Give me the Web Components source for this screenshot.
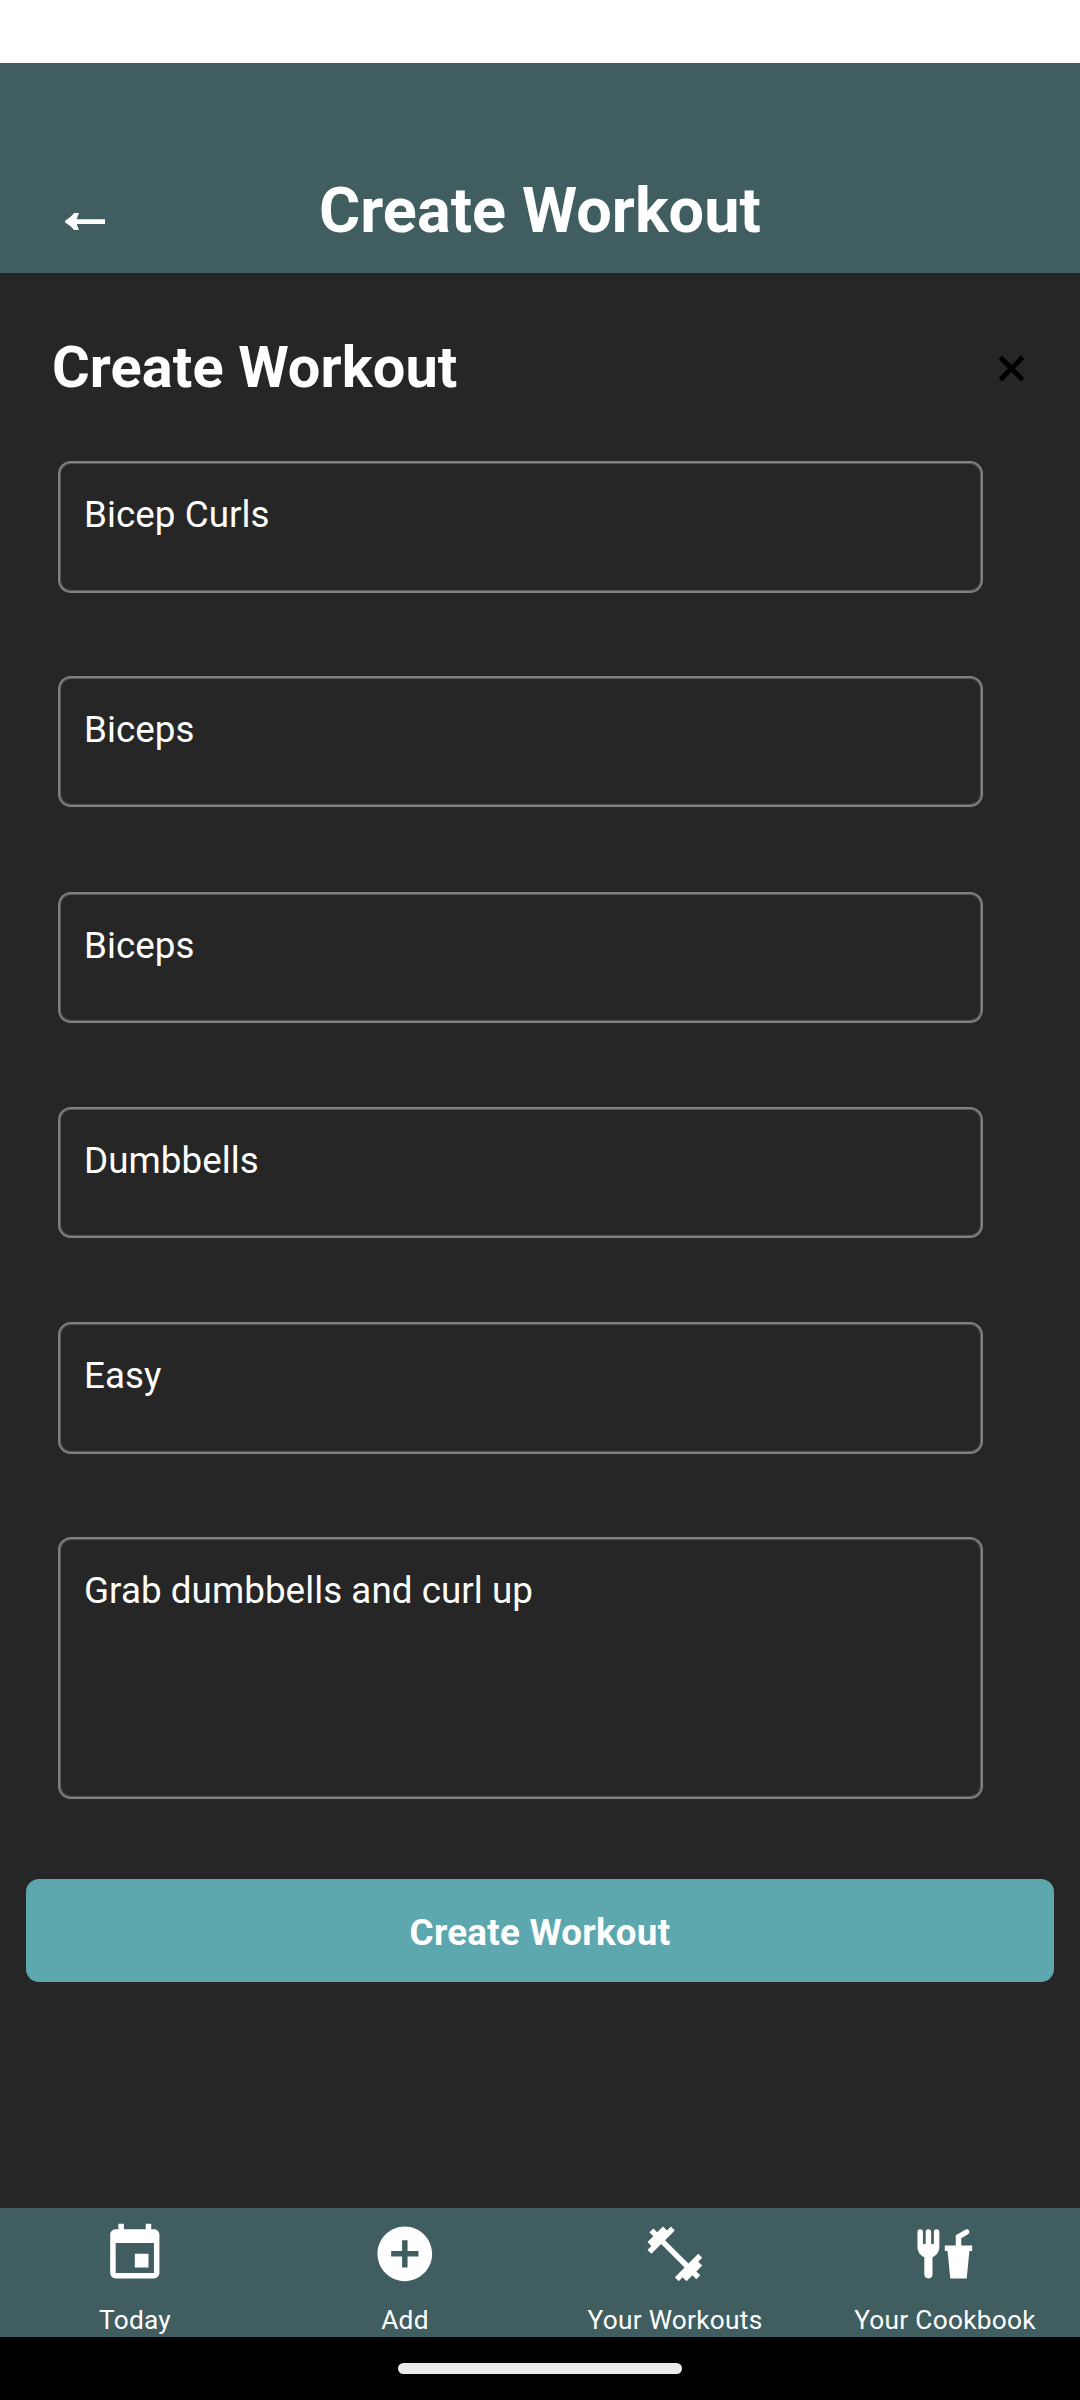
<!DOCTYPE html>
<html lang="en">
<head>
<meta charset="utf-8">
<title>Create Workout</title>
<style>
  html, body { margin: 0; padding: 0; background: #262626; }
  body { font-family: Roboto, "Liberation Sans", sans-serif; color: #fff; }
</style>
</head>
<body>
<workout-app></workout-app>
<script>
const define = (name, html) => {
  const template = document.createElement('template');
  template.innerHTML = html;
  customElements.define(name, class extends HTMLElement {
    constructor() {
      super();
      this.attachShadow({ mode: 'open' }).append(template.content.cloneNode(true));
    }
  });
};

define('app-header', `
  <style>
    :host { display: grid; grid-template-columns: 120px 1fr 120px; height: 210px; box-sizing: border-box; background: #405e60; padding-top: 111px; }
    svg { display: block; margin: 35px 0 0 62px; }
    h1 { margin: 0; font-size: 63px; line-height: 74px; font-weight: 700; letter-spacing: .06px; text-align: center; white-space: nowrap; }
  </style>
  <svg width="48" height="26" viewBox="62 209 48 26" fill="#fff"><path d="M105 219.2V224H76.7L78.9 230H74.2Q71 226 65.2 222.6V220.8Q71 217 74.2 213H78.9L76.7 219.2Z"/></svg>
  <h1><slot></slot></h1>`);

define('section-title', `
  <style>
    :host { display: flex; justify-content: space-between; align-items: center; padding: 0 55px 0 52px; height: 68px; }
    h2 { margin: 0; font-size: 57.75px; line-height: 68px; font-weight: 700; letter-spacing: .08px; white-space: nowrap; }
    svg { margin-top: 2px; }
  </style>
  <h2><slot></slot></h2>
  <svg width="27" height="27" viewBox="0 0 27 27" stroke="#000" stroke-width="4.8"><path d="M2.4 2.2L24.6 24.8M24.6 2.2L2.4 24.8"/></svg>`);

define('text-field', `
  <style>
    :host { display: block; box-sizing: border-box; width: 925px; height: 131px; padding: 30px 24px; border: 2px solid #808080; box-shadow: inset 0 0 0 1px rgba(128,128,128,.55); border-radius: 13px; font-size: 36.75px; line-height: 43px; letter-spacing: .06px; }
    :host([multiline]) { height: 262px; }
  </style>
  <slot></slot>`);

define('primary-button', `
  <style>
    :host { display: flex; align-items: center; justify-content: center; height: 103px; margin: 0 26px; border-radius: 13px; background: #5da7ae; font-size: 36.75px; line-height: 43px; font-weight: 700; letter-spacing: .25px; }
    button { all: unset; padding-top: 3px; }
  </style>
  <button><slot></slot></button>`);

define('nav-item', `
  <style>
    :host { display: flex; flex-direction: column; align-items: center; flex: 1 1 0; padding-top: 13px; box-sizing: border-box; font-size: 26.25px; line-height: 31px; letter-spacing: .28px; white-space: nowrap; }
    ::slotted(svg) { display: block; width: 65.625px; height: 65.625px; margin-bottom: 18.3px; fill: #fff; }
  </style>
  <slot name="icon"></slot><span><slot></slot></span>`);

define('tab-bar', `
  <style>:host { display: flex; height: 129px; background: #405e60; }</style>
  <slot></slot>`);

define('home-bar', `
  <style>
    :host { display: flex; justify-content: center; height: 63px; box-sizing: border-box; padding-top: 26px; background: #000; }
    i { width: 284px; height: 11px; border-radius: 6px; background: #ebebeb; }
  </style>
  <i></i>`);

define('workout-app', `
  <style>
    :host { display: flex; flex-direction: column; width: 1080px; height: 2400px; overflow: hidden; background: #262626; }
    .status { height: 63px; background: #fff; }
    main { flex: 1; padding-top: 60px; }
    section-title { margin-bottom: 60px; }
    form { display: grid; grid-template-rows: repeat(5, 215.25px) 341.75px; align-items: start; padding-left: 58px; }
    text-field.tall { height: 132px; }
  </style>
  <div class="status"></div>
  <app-header>Create Workout</app-header>
  <main>
    <section-title>Create Workout</section-title>
    <form>
      <text-field class="tall">Bicep Curls</text-field>
      <text-field>Biceps</text-field>
      <text-field>Biceps</text-field>
      <text-field>Dumbbells</text-field>
      <text-field class="tall">Easy</text-field>
      <text-field multiline>Grab dumbbells and curl up</text-field>
    </form>
    <primary-button>Create Workout</primary-button>
  </main>
  <tab-bar>
    <nav-item><svg slot="icon" viewBox="0 0 24 24"><path d="M17 12h-5v5h5v-5zM16 1v2H8V1H6v2H5c-1.11 0-1.99.9-1.99 2L3 19c0 1.1.89 2 2 2h14c1.1 0 2-.9 2-2V5c0-1.1-.9-2-2-2h-1V1h-2zm3 18H5V8h14v11z"/></svg>Today</nav-item>
    <nav-item><svg slot="icon" viewBox="0 0 24 24"><path d="M12 2C6.48 2 2 6.48 2 12s4.48 10 10 10 10-4.48 10-10S17.52 2 12 2zm5 11h-4v4h-2v-4H7v-2h4V7h2v4h4v2z"/></svg>Add</nav-item>
    <nav-item><svg slot="icon" viewBox="0 0 24 24"><path d="M20.57,14.86L22,13.43L20.57,12L17,15.57L8.43,7L12,3.43L10.57,2L9.14,3.43L7.71,2L5.57,4.14L4.14,2.71L2.71,4.14L4.14,5.57L2,7.71L3.43,9.14L2,10.57L3.43,12L7,8.43L15.57,17L12,20.57L13.43,22L14.86,20.57L16.29,22L18.43,19.86L19.86,21.29L21.29,19.86L19.86,18.43L22,16.29L20.57,14.86Z"/></svg>Your Workouts</nav-item>
    <nav-item><svg slot="icon" viewBox="0 0 24 24"><path d="M3,3A1,1 0 0,0 2,4V8L2,9.5C2,11.19 3.03,12.63 4.5,13.22V19.5A1.5,1.5 0 0,0 6,21A1.5,1.5 0 0,0 7.5,19.5V13.22C8.97,12.63 10,11.19 10,9.5V8L10,4A1,1 0 0,0 9,3A1,1 0 0,0 8,4V8A0.5,0.5 0 0,1 7.5,8.5A0.5,0.5 0 0,1 7,8V4A1,1 0 0,0 6,3A1,1 0 0,0 5,4V8A0.5,0.5 0 0,1 4.5,8.5A0.5,0.5 0 0,1 4,8V4A1,1 0 0,0 3,3M19.88,3C19.75,3 19.62,3.09 19.5,3.16L16,5.25V9H12V11H13L14,21H20L21,11H22V9H18V6.34L20.5,4.84C21,4.56 21.13,4 20.84,3.5C20.63,3.14 20.26,2.95 19.88,3Z"/></svg>Your Cookbook</nav-item>
  </tab-bar>
  <home-bar></home-bar>`);
</script>
</body>
</html>
